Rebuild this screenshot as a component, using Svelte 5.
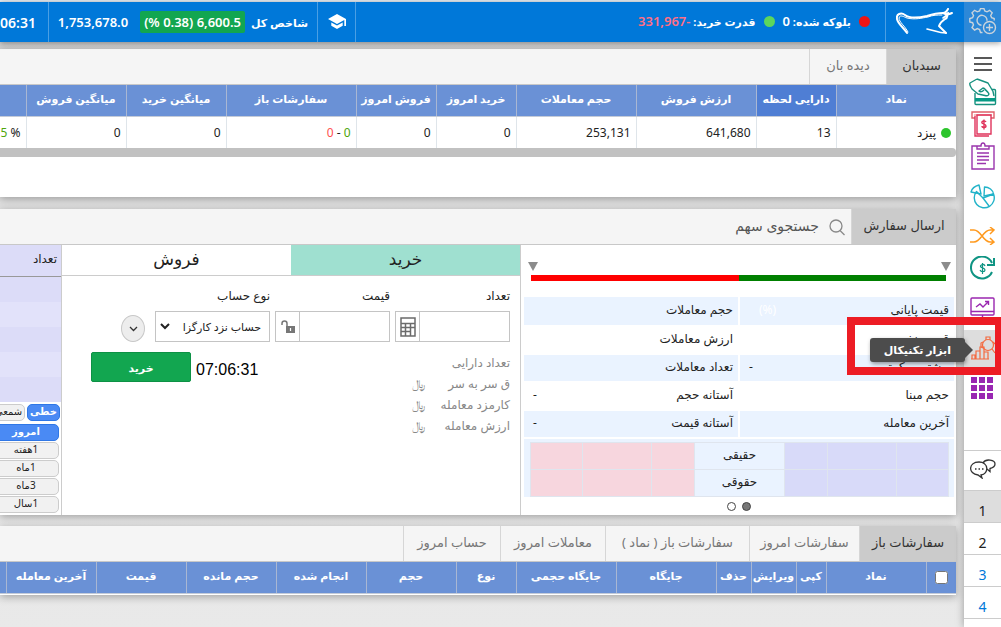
<script>
  const walletTabs = [
    { label: 'سبدبان', width: 70 },
    { label: 'دیده بان', width: 77 },
  ];

  const walletColumns = [
    { label: 'نماد', width: 120 },
    { label: 'دارایی لحظه', width: 80 },
    { label: 'ارزش فروش', width: 120 },
    { label: 'حجم معاملات', width: 120 },
    { label: 'خرید امروز', width: 80 },
    { label: 'فروش امروز', width: 80 },
    { label: 'سفارشات باز', width: 130 },
    { label: 'میانگین خرید', width: 100 },
    { label: 'میانگین فروش', width: 100 },
    { label: '', width: 100 },
  ];

  const orderTabs = [
    { label: 'سفارشات باز', width: 97 },
    { label: 'سفارشات امروز', width: 110 },
    { label: 'سفارشات باز ( نماد )', width: 144 },
    { label: 'معاملات امروز', width: 105 },
    { label: 'حساب امروز', width: 97 },
  ];

  const orderColumns = [
    { label: 'نماد', width: 100 },
    { label: 'کپی', width: 30 },
    { label: 'ویرایش', width: 45 },
    { label: 'حذف', width: 35 },
    { label: 'جایگاه', width: 100 },
    { label: 'جایگاه حجمی', width: 100 },
    { label: 'نوع', width: 60 },
    { label: 'حجم', width: 90 },
    { label: 'انجام شده', width: 90 },
    { label: 'حجم مانده', width: 90 },
    { label: 'قیمت', width: 90 },
    { label: 'آخرین معامله', width: 90 },
    { label: '', width: 90 },
  ];

  const facts = [
    { label: 'قیمت پایانی', value: '(%)', faint: true },
    { label: 'حجم معاملات', value: '' },
    { label: 'قیمت نخست', value: '' },
    { label: 'ارزش معاملات', value: '' },
    { label: 'بیشترین-کمترین', value: '-' },
    { label: 'تعداد معاملات', value: '' },
    { label: 'حجم مبنا', value: '' },
    { label: 'آستانه حجم', value: '-' },
    { label: 'آخرین معامله', value: '' },
    { label: 'آستانه قیمت', value: '-' },
  ];

  const costs = [
    { label: 'تعداد دارایی', unit: '' },
    { label: 'ق سر به سر', unit: '﷼' },
    { label: 'کارمزد معامله', unit: '﷼' },
    { label: 'ارزش معامله', unit: '﷼' },
  ];

  const ranges = ['امروز', '1هفته', '1ماه', '3ماه', '1سال'];
  const pages = [1, 2, 3, 4];

  let walletTab = $state(0);
  let orderTab = $state(0);
  let side = $state('buy');
  let range = $state(0);
  let page = $state(1);
</script>

<div class="app" dir="rtl">
  <header>
    <button class="settings" aria-label="تنظیمات">
      <svg width="28" height="28" viewBox="0 0 28 28" fill="none" stroke="#c9d3dc" stroke-width="1.4">
        <path d="M13.500 24.500h-2l-.9-3-2.300-.9-2.700 1.500-2.600-2.500 1.500-2.700-.9-2.200L.8 14v-3.400l2.800-.9.9-2.200L3 4.800l2.600-2.500 2.700 1.500 2.300-.9.9-2.400h3.400l.9 2.400 2.200.9 2.700-1.500 2.500 2.500-1.500 2.700.9 2.200 2.600.9v2" />
        <path d="M12.500 17.300a5 5 0 1 1 5.500-4.500" />
        <circle cx="20.500" cy="19.500" r="6" />
        <path d="M20.500 16v7M17 19.500h7" />
      </svg>
    </button>
    <a class="logo" href="#home" aria-label="خانه">
      <svg width="58" height="28" viewBox="0 0 58 28" fill="none" stroke="#fff" stroke-linecap="round" stroke-linejoin="round">
        <path d="M11 25C7 19 2 16 1 11 0 6 5 4 9 7c5 4 13 3 22 1 6-2 10-3 16-3 3 0 4-2 5-4" stroke-width="2" />
        <path d="M12 24C9 18 3 14 3 10c1-4 5-1 8 0 8 2 15 0 21-1 5-2 9-2 14-2" stroke-width="1" />
        <path d="M47 5c4 2 7 1 9 0M52 5c-1 3 0 5-3 6-3 2-5 4-6 7l3 3 4 4" stroke-width="2" />
        <path d="M50 25c-5 0-8-1-11-2l-8-2M51 7l-4 3" stroke-width="1.600" />
      </svg>
    </a>
    <div class="balances">
      <span class="dot red"></span>
      <span>بلوکه شده: <b>0</b></span>
      <span class="dot green"></span>
      <span>قدرت خرید: <b class="negative">-331,967</b></span>
    </div>
    <button class="school" aria-label="آموزش">
      <svg width="18" height="16" viewBox="0 0 18 16" fill="#fff">
        <path d="M9 0L0 5l9 5 7.300-4v6H18V5z" />
        <path d="M3.300 8.400v3.400L9 15l5.700-3.200V8.400L9 11.600z" />
      </svg>
    </button>
    <div class="index">
      <span>شاخص کل</span>
      <span class="change">6,600.5 (0.38 %)</span>
      <b class="total">1,753,678.0</b>
    </div>
    <time class="clock" dir="ltr">07:06:31</time>
  </header>

  <div class="body">
    <nav class="rail" aria-label="ابزارها">
      <button class="short" aria-label="منو">
        <svg width="18" height="14" viewBox="0 0 18 14" stroke="#222" stroke-width="1.5"><path d="M0 1h18M0 7h18M0 13h18" /></svg>
      </button>
      <button aria-label="پرداخت">
        <svg width="28" height="28" viewBox="0 0 28 28" fill="none" stroke="#16917f" stroke-width="1.4" stroke-linejoin="round">
          <path d="M6 15v10.500q0 1 1 1h18.500q1 0 1-1V12.500q0-1-1-1H23" />
          <path d="M6 20h20.500v3.500H6z" fill="#069a85" stroke="none" />
          <path d="M8 1L1 5c-1 2 1 4 2 6l6 5 7 1.500c3 1 5-1 3-3l-3-3M8 1l11 4 5 8.500 1 4.500M19 14c-2-1-3-4-5-4l-4 3c1 1 3 1 5-1" />
        </svg>
      </button>
      <button aria-label="دریافت وجه">
        <svg width="24" height="26" viewBox="0 0 24 26" fill="none" stroke="#e0345c" stroke-width="1.400">
          <path d="M4 7H1V1h22v6h-3" stroke="#e0606a" />
          <path d="M3 4h18" stroke="#f4a0a0" />
          <path d="M6 4h14v19H6z" />
          <path d="M4 5v20h14" />
          <path d="M15 11c-1-2-5-1-4 1 1 1 4 1 4 3s-4 2-4 0M13 8.500v10" />
        </svg>
      </button>
      <button aria-label="گزارش">
        <svg width="24" height="28" viewBox="0 0 24 28" fill="none" stroke="#9a35ad" stroke-width="1.400">
          <path d="M6 4H1v23h22V4h-5M6 4h4c0-4 4-4 4 0h4v3H6z" />
          <path d="M6 11h12M6 14.500h12M6 18h12M6 21.500h9" />
        </svg>
      </button>
      <button class="apart" aria-label="نمودار دایره ای">
        <svg width="25" height="25" viewBox="0 0 25 25" fill="none" stroke="#22b3c9" stroke-width="1.400" stroke-linejoin="round">
          <path d="M13 14L6.500 7.500A10 10 0 1 0 23.500 10z" />
          <path d="M11 10L9 1C5 2 2 4 1 8zM14 12l.5-9C19 3 23 6 23.500 10zM13 14l6 8" />
        </svg>
      </button>
      <button class="apart" aria-label="جابجایی">
        <svg width="25" height="18" viewBox="0 0 25 18" fill="none" stroke="#ff9a1f" stroke-width="1.500">
          <path d="M0 3h4c7 0 9 12 16 12h4M0 15h4c7 0 9-12 16-12h4M20 0l4 3-4 4M20 11l4 4-4 3" />
        </svg>
      </button>
      <button aria-label="تبدیل وجه">
        <svg width="25" height="25" viewBox="0 0 25 25" fill="none" stroke="#0f9483" stroke-width="2">
          <path d="M22 16A11 11 0 1 1 22 7" />
          <path d="M24 2v7h-7" />
          <path d="M15 10c-1-3-5-1-4.500.5s4.500 1.500 4.500 3.500-4 2.500-5 0M12.500 7v11" stroke-width="1.200" />
        </svg>
      </button>
      <button class="apart" aria-label="مانیتور">
        <svg width="25" height="22" viewBox="0 0 25 22" fill="none" stroke="#9a27b0" stroke-width="1.400">
          <rect x="1" y="1" width="23" height="17" rx="1" />
          <path d="M1 14.500h23M6 10l4-3 3 3 5-5M15 4.500h3.500V8M12.500 18v4" />
        </svg>
      </button>
      <div class="tool">
        <button class="current" aria-label="ابزار تکنیکال" aria-describedby="tool-tip">
          <svg width="26" height="26" viewBox="0 0 26 26" fill="none" stroke="#f4693f" stroke-width="1.200">
            <path d="M1 23h18M2 23v-4h3v4M6 23v-8h4v8M10 23V11h4v12M14 23v-7h4v7" />
            <circle cx="18" cy="9" r="5.500" />
            <path d="M16 4V1h4v3M13 6l-2 1v4l2 1M22 13l3 4M23 6l2 2" />
          </svg>
        </button>
        <span class="tip" id="tool-tip" role="tooltip">ابزار تکنیکال</span>
        <span class="frame"></span>
      </div>
      <button class="apps" aria-label="برنامه ها">
        <svg width="23" height="23" viewBox="0 0 23 23" fill="#9926b2">
          {#each [0, 8, 16] as y}
            {#each [0, 8, 16] as x}
              <rect {x} {y} width="6" height="6" />
            {/each}
          {/each}
        </svg>
      </button>
      <button class="chat" aria-label="گفتگو">
        <svg width="26" height="20" viewBox="0 0 26 20" fill="none" stroke="#333" stroke-width="1.300">
          <path d="M9 3c-11 0-11 12-1 13l4 3-1-3c8-1 8-13-2-13z" />
          <path d="M13 4c3-5 12-3 12 1 0 3-3 4-5 4.500v3L17 10" />
          <path d="M5 10h1.500M8.500 10H10M12 10h1.500" />
        </svg>
      </button>
      {#each pages as n}
        <button class="page" class:selected={page === n} class:link={n > 2} onclick={() => (page = n)}>{n}</button>
      {/each}
      <span class="rail-end"></span>
    </nav>

    <main>
      <section class="panel wallet">
        <div class="tabs">
          {#each walletTabs as tab, i}
            <button class:active={walletTab === i} style:width="{tab.width}px" onclick={() => (walletTab = i)}>{tab.label}</button>
          {/each}
        </div>
        <table class="grid">
          <colgroup>
            {#each walletColumns as col}
              <col style:width="{col.width}px" />
            {/each}
          </colgroup>
          <thead>
            <tr>
              {#each walletColumns as col, i}
                <th class:sorted={i === 1}>{col.label}</th>
              {/each}
            </tr>
          </thead>
          <tbody>
            <tr>
              <td><span class="dot live"></span>پیزد</td>
              <td>13</td>
              <td>641,680</td>
              <td>253,131</td>
              <td>0</td>
              <td>0</td>
              <td><span class="up">0</span> - <span class="down">0</span></td>
              <td>0</td>
              <td>0</td>
              <td>% <span class="up">5.15</span></td>
            </tr>
          </tbody>
        </table>
        <div class="scrollbar"></div>
      </section>

      <section class="panel trade">
        <div class="tabs">
          <button class="active send">ارسال سفارش</button>
          <label class="search">
            <svg width="16" height="17" viewBox="0 0 16 17" fill="none" stroke="#888" stroke-width="1.300">
              <circle cx="7" cy="7" r="6" /><path d="M11 11.500l4.500 4.500" />
            </svg>
            <input type="text" placeholder="جستجوی سهم" aria-label="جستجوی سهم" />
          </label>
        </div>

        <div class="columns">
          <div class="info">
            <div class="markers">
              <svg width="10" height="9" viewBox="0 0 10 9" fill="#8c8c8c"><path d="M0 0h10L5 9z" /></svg>
              <svg width="10" height="9" viewBox="0 0 10 9" fill="#8c8c8c"><path d="M0 0h10L5 9z" /></svg>
            </div>
            <div class="gauge"><span class="high"></span><span class="low"></span></div>
            <dl class="facts">
              {#each facts as fact, i}
                <div class:tinted={i % 4 < 2}>
                  <dt>{fact.label}</dt>
                  <dd class:faint={fact.faint}>{fact.value}</dd>
                </div>
              {/each}
            </dl>
            <div class="holders">
              <table>
                <tbody>
                  {#each ['حقیقی', 'حقوقی'] as kind}
                    <tr>
                      <td class="buyers outer"></td>
                      <td class="buyers middle"></td>
                      <td class="buyers inner"></td>
                      <th scope="row">{kind}</th>
                      <td class="sellers inner"></td>
                      <td class="sellers middle"></td>
                      <td class="sellers outer"></td>
                    </tr>
                  {/each}
                </tbody>
              </table>
            </div>
            <div class="pager">
              <button class="on" aria-label="صفحه ۱"></button>
              <button aria-label="صفحه ۲"></button>
            </div>
          </div>

          <form class="order" onsubmit={(e) => e.preventDefault()}>
            <div class="sides">
              <button type="button" class:chosen={side === 'buy'} onclick={() => (side = 'buy')}>خرید</button>
              <button type="button" class:chosen={side === 'sell'} onclick={() => (side = 'sell')}>فروش</button>
            </div>
            <div class="fields">
              <div class="field">
                <label for="count">تعداد</label>
                <div class="box">
                  <input id="count" type="text" />
                  <button type="button" aria-label="ماشین حساب">
                    <svg width="16" height="20" viewBox="0 0 16 20" fill="none" stroke="#6b6b6b" stroke-width="1.500">
                      <path d="M1 1h14v18H1zM1 6.500h14M1 10.500h14M1 14.500h10M5.500 6.500V19M10.500 6.500V19" />
                    </svg>
                  </button>
                </div>
              </div>
              <div class="field">
                <label for="price">قیمت</label>
                <div class="box">
                  <input id="price" type="text" />
                  <button type="button" aria-label="قفل قیمت">
                    <svg width="14" height="14" viewBox="0 0 14 14">
                      <path d="M1 5V3.500a2.500 2.500 0 0 1 5 0V7" fill="none" stroke="#777" stroke-width="1.500" />
                      <path d="M5 6h9v7H5z" fill="#777" />
                      <path d="M9.500 8v3" stroke="#fff" stroke-width="1.200" />
                    </svg>
                  </button>
                </div>
              </div>
              <div class="field">
                <label for="account">نوع حساب</label>
                <div class="box">
                  <select id="account">
                    <option>حساب نزد کارگزا</option>
                  </select>
                  <svg class="caret" width="10" height="7" viewBox="0 0 10 7" fill="none" stroke="#222" stroke-width="2"><path d="M1 1l4 4 4-4" /></svg>
                </div>
              </div>
              <button type="button" class="more" aria-label="بیشتر">
                <svg width="9" height="6" viewBox="0 0 9 6" fill="none" stroke="#333" stroke-width="1.300"><path d="M1 1l3.500 3.500L8 1" /></svg>
              </button>
            </div>
            <div class="summary">
              <ul>
                {#each costs as cost}
                  <li><span>{cost.label}</span><span>{cost.unit}</span></li>
                {/each}
              </ul>
              <div class="submit">
                <time dir="ltr">07:06:31</time>
                <button class="buy">خرید</button>
              </div>
            </div>
          </form>

          <div class="book">
            <table>
              <thead>
                <tr><th>تعداد</th></tr>
              </thead>
              <tbody>
                {#each { length: 5 } as _}
                  <tr><td></td></tr>
                {/each}
              </tbody>
            </table>
            <div class="kinds">
              <button class="pill on">خطی</button>
              <button class="pill">شمعی</button>
            </div>
            <div class="ranges">
              {#each ranges as label, i}
                <button class="pill" class:on={range === i} onclick={() => (range = i)}>{label}</button>
              {/each}
            </div>
          </div>
        </div>
      </section>

      <section class="panel orders">
        <div class="tabs">
          {#each orderTabs as tab, i}
            <button class:active={orderTab === i} style:width="{tab.width}px" onclick={() => (orderTab = i)}>{tab.label}</button>
          {/each}
        </div>
        <table class="grid">
          <colgroup>
            <col class="check" />
            {#each orderColumns as col}
              <col style:width="{col.width}px" />
            {/each}
          </colgroup>
          <thead>
            <tr>
              <th><input type="checkbox" aria-label="انتخاب همه" /></th>
              {#each orderColumns as col}
                <th>{col.label}</th>
              {/each}
            </tr>
          </thead>
        </table>
      </section>
    </main>
  </div>
</div>

<style>
  :global(body) {
    margin: 0;
    background: #e7e7e7;
  }

  .app {
    min-height: 100vh;
    display: flex;
    flex-direction: column;
    box-sizing: border-box;
    padding-top: 2px;
    overflow: hidden;
    font-family: 'Noto Sans', 'DejaVu Sans', sans-serif;
    font-size: 12px;
    color: #222;
    background: linear-gradient(#e6eef5 2px, transparent 2px);
  }

  .app :is(button, input, select) {
    font: inherit;
    color: inherit;
    box-sizing: border-box;
    margin: 0;
  }

  button {
    display: flex;
    align-items: center;
    justify-content: center;
    padding: 0;
    border: 0;
    background: none;
    white-space: nowrap;
    cursor: pointer;
  }

  header {
    position: relative;
    z-index: 2;
    display: flex;
    height: 40px;
    flex-shrink: 0;
    background: #0078d9;
    color: #fff;
    font-size: 11px;
    font-weight: bold;
    white-space: nowrap;
    box-shadow: 0 1px 6px rgba(0, 0, 0, 0.4);
  }

  header > * {
    display: flex;
    align-items: center;
    flex-shrink: 0;
    box-sizing: border-box;
    border-left: 1px solid #4a9fe4;
  }

  .settings {
    width: 37px;
    border: 0;
    background: #2c88d8;
  }

  .logo {
    width: 79px;
    justify-content: center;
  }

  .balances {
    flex: 1 0 auto;
    gap: 8px;
    padding: 0 15px 2px;
  }

  .balances b,
  .change,
  .total {
    font-size: 13px;
    font-weight: 600;
  }

  .negative {
    color: #ff6f86;
  }

  .dot {
    display: inline-block;
    width: 11px;
    height: 11px;
    border-radius: 50%;
  }

  .dot.red {
    background: #ee1414;
  }

  .dot.green {
    background: #5cd65c;
  }

  .dot.live {
    width: 10px;
    height: 10px;
    margin-left: 5px;
    vertical-align: middle;
    background: #2dc52d;
  }

  .school {
    width: 38px;
  }

  .index {
    width: 269px;
    padding-right: 9px;
    gap: 6px;
  }

  .change {
    padding: 0 4px;
    line-height: 22px;
    border-radius: 2px;
    background: #12a650;
  }

  .total {
    margin-right: 6px;
  }

  .clock {
    flex-shrink: 1;
    min-width: 0;
    width: 48px;
    padding-right: 12px;
    border: 0;
    justify-content: flex-end;
    font-size: 14px;
    font-weight: 600;
  }

  .body {
    flex: 1;
    display: flex;
  }

  .rail {
    position: relative;
    z-index: 1;
    display: flex;
    flex-direction: column;
    flex: 0 0 37px;
    padding-top: 10px;
    background: #fff;
    box-shadow: 0 0 8px rgba(0, 0, 0, 0.35);
  }

  .rail button {
    flex: 0 0 32px;
    width: 100%;
    padding-left: 0;
    padding-right: 0;
  }

  .rail .short {
    flex-basis: 24px;
  }

  .rail .apart {
    margin-top: 8px;
  }

  .tool {
    position: relative;
    margin-top: 6px;
  }

  .rail .current {
    height: 38px;
    background: #ddd;
  }

  .tip {
    position: absolute;
    top: 8px;
    right: 36px;
    padding: 0 14px;
    line-height: 24px;
    border-radius: 3px;
    background: #4c4c4c;
    color: #fff;
    font-size: 11px;
    font-weight: bold;
    white-space: nowrap;
    box-shadow: 1px 2px 4px rgba(0, 0, 0, 0.4);
  }

  .tip::after {
    content: '';
    position: absolute;
    right: -8px;
    top: 4px;
    border: 8px solid transparent;
    border-right: 0;
    border-left-color: #4c4c4c;
  }

  .frame {
    position: absolute;
    top: -13px;
    right: -2px;
    width: 140px;
    height: 42px;
    border: 8px solid #ed1c24;
    pointer-events: none;
  }

  .rail .apps {
    margin-top: 4px;
  }

  .rail .chat {
    flex-basis: 40px;
    margin-top: 46px;
    padding-bottom: 4px;
    border-top: 1px solid #ccc;
  }

  .rail .page {
    padding-top: 8px;
    border-top: 1px solid #ccc;
    font-size: 14px;
  }

  .rail .selected {
    background: #ddd;
  }

  .rail .link {
    color: #0078d9;
  }

  .rail-end {
    border-top: 1px solid #ccc;
  }

  main {
    flex: 1;
    min-width: 0;
    padding: 7px 8px 0 0;
    background: linear-gradient(#d2d2d2, #e0e0e0 160px, #e9e9e9);
  }

  .panel {
    overflow: hidden;
    background: #fff;
    box-shadow: 0 2px 8px rgba(0, 0, 0, 0.3);
  }

  .wallet {
    min-height: 148px;
    margin-bottom: 12px;
  }

  .trade {
    margin-bottom: 11px;
  }

  .orders {
    padding-bottom: 1px;
  }

  .tabs {
    display: flex;
    height: 35px;
    border-bottom: 1px solid #c8c8c8;
    background: #f5f5f5;
    font-size: 13px;
    color: #777;
  }

  .tabs button {
    flex-shrink: 0;
    padding-bottom: 4px;
    border-left: 1px solid #d6d6d6;
  }

  .tabs .active {
    background: #cbcbcb;
    color: #333;
  }

  .tabs .send {
    width: 105px;
  }

  table {
    border-collapse: collapse;
    border-spacing: 0;
  }

  .grid {
    width: max-content;
    table-layout: fixed;
  }

  .grid .check {
    width: 30px;
  }

  .grid th {
    box-sizing: border-box;
    height: 31px;
    padding: 0 0 4px;
    border-left: 1px solid #a9b7d3;
    border-bottom: 1px solid #c4cbd8;
    background: #6a91d6;
    color: #fff;
    font-size: 11px;
    font-weight: bold;
    white-space: nowrap;
  }

  .grid .sorted {
    background: #4f7ed4;
  }

  .grid td {
    height: 31px;
    padding: 0 5px;
    border-left: 1px solid #dfe5ea;
    text-align: right;
  }

  .grid input {
    display: block;
    width: 13px;
    height: 13px;
    margin: 4px auto 0;
  }

  .up {
    color: #4ea60c;
  }

  .down {
    color: #ff4f4f;
  }

  .scrollbar {
    height: 9px;
    border-radius: 0 4px 4px 0;
    background: #c1c1c1;
  }

  .search {
    display: flex;
    align-items: center;
    gap: 10px;
    padding: 2px 6px 0 0;
  }

  .search input {
    width: 160px;
    padding: 0 0 4px;
    border: 0;
    outline: 0;
    background: none;
    font-size: 14px;
  }

  .search input::placeholder {
    color: #555;
    opacity: 1;
  }

  .columns {
    display: grid;
    grid-template-columns: minmax(0, 436fr) minmax(0, 459fr) minmax(0, 61fr);
    min-height: 270px;
  }

  .info {
    padding: 17px 2px 0 3px;
    border-left: 1px solid #ccc;
  }

  .markers {
    display: flex;
    justify-content: space-between;
    padding: 0 3px 0 4px;
  }

  .markers svg {
    display: block;
  }

  .gauge {
    display: flex;
    height: 6px;
    margin: 4px 8px 16px 7px;
  }

  .gauge span {
    flex: 1;
  }

  .high {
    background: #008000;
  }

  .low {
    background: #f00;
  }

  .facts {
    display: grid;
    grid-template-columns: 1fr 1fr;
    grid-template-rows: 28px 30px 26px 30px 26px;
    column-gap: 2px;
    margin: 0 0 2px;
  }

  .facts > div {
    display: flex;
    align-items: center;
    justify-content: space-between;
    padding: 0 5px 4px 9px;
  }

  .facts dd {
    margin: 0;
  }

  .facts .faint {
    padding-left: 10px;
    color: #fff;
  }

  .tinted,
  .holders {
    background: #eaf3ff;
  }

  .holders {
    padding: 3px 5px 0 6px;
  }

  .holders table {
    width: 100%;
    table-layout: fixed;
  }

  .holders :is(td, th) {
    box-sizing: border-box;
    height: 27px;
    padding: 0 0 4px;
    border: 1px solid #dfe5ee;
    font-weight: normal;
  }

  .holders .buyers {
    background: #d8daf9;
  }

  .holders .sellers {
    background: #f7d6de;
  }

  .outer {
    width: 52px;
  }

  .middle {
    width: 69px;
  }

  .inner {
    width: 43px;
  }

  .pager {
    display: flex;
    justify-content: center;
    gap: 6px;
    padding: 5px 0 4px;
  }

  .pager button {
    width: 9px;
    height: 9px;
    border: 1px solid #444;
    border-radius: 50%;
  }

  .pager .on {
    background: #777;
  }

  .order {
    border-left: 1px solid #ccc;
  }

  .sides {
    display: grid;
    grid-template-columns: 1fr 1fr;
    height: 30px;
    border-bottom: 1px solid #ccc;
    font-size: 17px;
  }

  .sides button {
    padding-bottom: 4px;
  }

  .sides .chosen {
    background: #9fe0d0;
  }

  .fields {
    display: flex;
    align-items: flex-end;
    gap: 5px;
    padding: 10px 10px 0 0;
  }

  .field {
    display: flex;
    flex-direction: column;
    gap: 6px;
    flex: 0 1 115px;
    min-width: 0;
  }

  .field label {
    line-height: 19px;
  }

  .box {
    position: relative;
    display: flex;
    box-sizing: border-box;
    height: 31px;
    border: 1px solid #c4c4c4;
  }

  .box input {
    flex: 1;
    min-width: 0;
    padding: 0 5px;
    border: 0;
    outline: 0;
  }

  .box button {
    flex: 0 0 24px;
    border-right: 1px solid #c4c4c4;
  }

  .box select {
    width: 100%;
    padding: 0 8px 0 16px;
    border: 0;
    appearance: none;
    background: #fff;
    font-size: 11px;
  }

  .caret {
    position: absolute;
    left: 4px;
    top: 11px;
    pointer-events: none;
  }

  .order .more {
    flex-shrink: 0;
    width: 24px;
    height: 27px;
    margin-right: 5px;
    border: 1px solid #c8c8c8;
    border-radius: 50%;
    background: #ededed;
  }

  .summary {
    display: flex;
    justify-content: space-between;
    padding: 10px 10px 0 29px;
  }

  .summary ul {
    flex: 0 0 98px;
    margin: 0;
    padding: 0;
    list-style: none;
    color: #888;
  }

  .summary li {
    display: flex;
    justify-content: space-between;
    line-height: 21px;
    white-space: nowrap;
  }

  .submit {
    display: flex;
    align-items: flex-start;
    gap: 5px;
  }

  .submit time {
    padding-top: 8px;
    font-family: 'Liberation Sans', Arial, sans-serif;
    font-size: 16px;
    line-height: 20px;
    color: #000;
  }

  .order .buy {
    width: 100px;
    height: 30px;
    border: 1px solid #0d9145;
    border-radius: 2px;
    background: #12a650;
    color: #fff;
    font-size: 11px;
    font-weight: bold;
  }

  .book {
    overflow: hidden;
  }

  .book table {
    width: 100%;
  }

  .book th {
    box-sizing: border-box;
    height: 31px;
    padding: 0 4px 4px;
    border-bottom: 1px solid #999;
    background: #dcdcf8;
    font-size: 12px;
    font-weight: normal;
    text-align: right;
  }

  .book td {
    height: 25px;
    padding: 0;
    background: #dcdcf8;
  }

  .book tr:nth-child(even) td {
    background: #e2e2fa;
  }

  .kinds {
    display: flex;
    gap: 2px;
    padding: 2px 1px 3px 0;
  }

  .ranges {
    display: flex;
    flex-direction: column;
    gap: 1px;
    width: 66px;
    padding-right: 2px;
  }

  .book .pill {
    height: 17px;
    padding-bottom: 2px;
    flex-shrink: 0;
    border: 1px solid #ccc;
    border-radius: 5px;
    background: #f1f1f1;
    font-size: 10px;
  }

  .kinds .pill {
    width: 33px;
  }

  .book .on {
    border-color: #2f77e6;
    background: #4a8af4;
    color: #fff;
    font-weight: bold;
  }
</style>
